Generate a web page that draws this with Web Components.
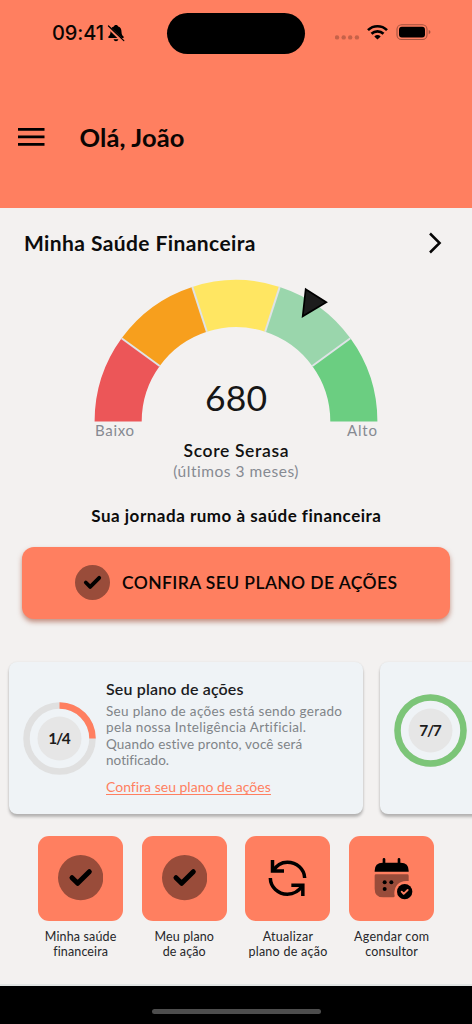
<!DOCTYPE html>
<html lang="pt-BR">
<head>
<meta charset="utf-8">
<title>Minha Saúde Financeira</title>
<style>
html,body{margin:0;padding:0;background:#f3f1f0}
body{width:472px;height:1024px;overflow:hidden;font-family:Lato,"Open Sans",sans-serif;color:#0c0c0c}
</style>
</head>
<body>
<finance-app></finance-app>
<script>
const define = (name, html, setup) => customElements.define(name, class extends HTMLElement {
  connectedCallback() {
    if (this.shadowRoot) return;
    const root = this.attachShadow({mode: 'open'});
    root.innerHTML = typeof html === 'function' ? html(this) : html;
    if (setup) setup(this, root);
  }
});

// One line of text, tracked so that it spans the width in "w".
define('text-line', el => `
<style>
:host{display:block;width:${el.getAttribute('w')}px;height:var(--lh,20px);line-height:var(--lh,20px);font-size:${el.getAttribute('s')}px;white-space:nowrap;flex:none}
span{display:inline-block;height:100%;vertical-align:top}
</style><span><slot></slot></span>`, (el, root) => {
  const span = root.querySelector('span');
  const natural = span.getBoundingClientRect().width;
  const spacing = (parseFloat(el.getAttribute('w')) - natural) / (el.textContent.length - 1);
  span.style.letterSpacing = spacing.toFixed(3) + 'px';
  span.style.marginRight = (-spacing).toFixed(3) + 'px';
});

define('status-bar', `
<style>
:host{display:grid;grid-template-columns:52px 53px 62px 138px 30px 1fr;height:66px;align-items:center}
.time{grid-column:2;font-family:Inter,sans-serif;font-weight:500;color:#0a0503}
.bell{width:18px;height:18px;margin-left:2px}
.island{width:138px;height:41px;border-radius:21px;background:#000}
.right{grid-column:6;width:100px;height:20px;margin-top:-2px}
svg{display:block}
</style>
<text-line class="time" w="52" s="20">09:41</text-line>
<svg class="bell" viewBox="0 0 18 18"><path d="M9 1C7.800 1 7 1.700 6.800 2.500 4.200 3.300 3.600 5.600 3.500 7.700 3.400 10.200 2.800 11.300 1.400 12.500v1.500h15.200v-1.500c-1.400-1.200-2-2.300-2.100-4.800-.1-2.100-.7-4.400-3.300-5.200C11 1.700 10.200 1 9 1zM6.600 15.200h4.800c-.3 1.200-1.200 2-2.400 2s-2.100-.8-2.400-2z"/><path d="M.8 2.600 16 17.400" stroke="#ff7f60" stroke-width="3"/><path d="M1.500 2 16.800 16.600" stroke="#000" stroke-width="1.300" stroke-linecap="round"/></svg>
<div class="island"></div>
<svg class="right" viewBox="335 22 100 20">
<g fill="#c66249"><circle cx="337" cy="37.400" r="2.200"/><circle cx="343.700" cy="37.400" r="2.200"/><circle cx="350.200" cy="37.400" r="2.200"/><circle cx="356.900" cy="37.400" r="2.200"/></g>
<g fill="none" stroke="#000" stroke-width="2.700"><path d="M368 30.100a13.600 13.600 0 0 1 19 0"/><path d="M371.500 33.800a8.700 8.700 0 0 1 12 0"/></g>
<path d="M377.500 39.600 374.300 36.500a4.700 4.700 0 0 1 6.400 0z"/>
<rect x="397" y="24.700" width="30" height="14.800" rx="4.600" fill="none" stroke="#a4523e" stroke-width="1.100"/><rect x="399" y="26.800" width="26" height="10.600" rx="2.900"/><path d="M428.700 30v4.200q1.800-.6 1.800-2.100t-1.800-2.100z" fill="#a4523e"/>
</svg>`);

define('app-header', `
<style>
:host{display:block;height:208px;background:#ff7f60}
.bar{display:flex;align-items:center;height:142px;padding-left:18px;gap:35px}
svg{display:block;width:26.500px;height:20px;margin-top:-1px}
text-line{font-weight:700;--lh:32px;color:#0a0503}
</style>
<status-bar></status-bar>
<div class="bar"><svg viewBox="0 0 26.500 20"><path d="M0 2.300h26.500M0 9.800h26.500M0 17.300h26.500" stroke="#000" stroke-width="2.700"/></svg><text-line w="105" s="25.500">Olá, João</text-line></div>`);

define('section-heading', el => `
<style>
:host{display:flex;align-items:center;justify-content:space-between;height:70px;padding:0 29px 0 24px}
text-line{font-weight:700}
svg{width:16px;height:24px}
</style>
<text-line w="231.500" s="21">${el.getAttribute('label')}</text-line>
<svg viewBox="0 0 16 24"><path d="M3 2.500 12.600 12 3 21.500" fill="none" stroke="#050505" stroke-width="2.500"/></svg>`);

define('score-gauge', () => {
  const colors = ['#ec5658', '#f79f1d', '#ffe662', '#9ad6ac', '#6bce81'];
  const pt = (r, deg) => { const a = deg * Math.PI / 180; return (236 - r * Math.cos(a)).toFixed(2) + ' ' + (421.400 - r * Math.sin(a)).toFixed(2); };
  const R = 141.400, r = 94.300;
  const arcs = colors.map((c, i) => `<path fill="${c}" d="M${pt(R, i*36)}A${R} ${R} 0 0 1 ${pt(R, i*36+36)}L${pt(r, i*36+36)}A${r} ${r} 0 0 0 ${pt(r, i*36)}Z"/>`).join('');
  const seps = [36, 72, 108, 144].map(a => `<path d="M${pt(R, a)}L${pt(r, a)}" stroke="#dfe3e6" stroke-width="2"/>`).join('');
  return `
<style>
:host{display:flex;flex-direction:column;align-items:center;position:relative;height:228px}
svg{display:block;width:472px;height:144px}
.score{position:absolute;top:100px;left:205px;--lh:40px;color:#161616}
.ends{display:flex;justify-content:space-between;width:282px;height:16px;--lh:16px;color:#868a92}
.name{margin-top:3px;font-weight:600;color:#111}
.sub{color:#868a92}
</style>
<svg viewBox="0 278 472 144">${arcs}${seps}<path d="M305.700 289.200 326.300 302.300 302.700 316.300z" fill="#1c1c1c" stroke="#000" stroke-width="1.700"/></svg>
<text-line class="score" w="62" s="35.500">680</text-line>
<div class="ends"><text-line w="39" s="15">Baixo</text-line><text-line w="30" s="15">Alto</text-line></div>
<text-line class="name" w="105" s="17.500">Score Serasa</text-line>
<text-line class="sub" w="125.500" s="15.500">(últimos 3 meses)</text-line>`;
});

define('check-disc', `
<style>:host{display:block}svg{display:block;width:100%;height:100%}</style>
<svg viewBox="0 0 136 136"><circle cx="68" cy="68" r="68" fill="#994c3a"/><path d="M42 68 59 85 94 50" fill="none" stroke="#000" stroke-width="15" stroke-linecap="round" stroke-linejoin="round"/></svg>`);

define('plan-button', `
<style>
:host{display:block;margin:21px 22px 0}
button{display:flex;align-items:center;gap:12px;width:428px;height:71.500px;padding:0 0 0 53px;border:0;border-radius:12px;background:#ff7f60;box-shadow:0 3px 5px rgba(155,65,40,.55);font:600 18px Lato,sans-serif;color:#0a0503}
check-disc{width:35px;height:35px}
</style>
<button><check-disc></check-disc><text-line w="275" s="17.500">CONFIRA SEU PLANO DE AÇÕES</text-line></button>`);

define('progress-ring', el => {
  const p = +el.getAttribute('done') / +el.getAttribute('total'), c = 2 * Math.PI * 33;
  return `
<style>
:host{display:grid;place-items:center;width:73px;height:73px;flex:none}
svg,text-line{grid-area:1/1}
svg{width:73px;height:73px}
text-line{font-weight:700;color:#1c1c1c}
</style>
<svg viewBox="0 0 73 73"><circle cx="36.500" cy="36.500" r="22" fill="#e6e6e6"/><g fill="none" stroke-width="6.500" transform="rotate(-90 36.500 36.500)"><circle cx="36.500" cy="36.500" r="33" stroke="#e0e0e0"/><circle cx="36.500" cy="36.500" r="33" stroke="${p < 1 ? '#ff7f60' : '#7cc578'}" stroke-dasharray="${c * p} ${c}"/></g></svg>
<text-line w="22.500" s="15.500">${el.getAttribute('done')}/${el.getAttribute('total')}</text-line>`;
});

define('plan-card', `
<style>
:host{display:flex;box-sizing:border-box;flex:none;width:354px;height:152px;border-radius:8px;background:#eff3f6;box-shadow:0 3px 3px rgba(0,0,0,.25),0 0 2px rgba(0,0,0,.08);padding-left:14px;gap:10px}
</style><slot></slot>`);

define('plan-carousel', `
<style>
:host{display:flex;gap:17px;padding:43.500px 0 0 9px;box-sizing:border-box;height:217px;overflow:hidden}
.r1{margin-top:39.500px}.r2{margin-top:31.500px}
.copy{display:flex;flex-direction:column;padding-top:17px}
.title{font-weight:600;color:#1b1c1e}
.body{--lh:16.500px;color:#808488}
.body:nth-child(2){margin-top:3.500px}
.link{margin-top:10px;color:#ff7f60;border-bottom:1px solid #ff7f60;--lh:15.500px}
</style>
<plan-card><progress-ring class="r1" done="1" total="4"></progress-ring><div class="copy">
<text-line class="title" w="137.500" s="16">Seu plano de ações</text-line>
<text-line class="body" w="236" s="13.500">Seu plano de ações está sendo gerado</text-line>
<text-line class="body" w="200" s="13.500">pela nossa Inteligência Artificial.</text-line>
<text-line class="body" w="196.500" s="13.500">Quando estive pronto, você será</text-line>
<text-line class="body" w="63" s="13.500">notificado.</text-line>
<text-line class="link" w="164.500" s="14">Confira seu plano de ações</text-line>
</div></plan-card>
<plan-card><progress-ring class="r2" done="7" total="7"></progress-ring></plan-card>`);

define('action-tile', `
<style>
:host{display:flex;flex-direction:column;align-items:center;width:85px}
.box{display:grid;place-items:center;width:85px;height:85px;border-radius:11px;background:#ff7f60;margin-bottom:8px}
::slotted(text-line){--lh:15.500px;color:#26272a}
</style><div class="box"><slot name="icon"></slot></div><slot></slot>`);

define('quick-actions', `
<style>
:host{display:flex;gap:18.700px;padding-left:38px;height:148px}
check-disc{width:45.300px;height:45.300px}
svg{display:block;width:85px;height:85px}
</style>
<action-tile><check-disc slot="icon"></check-disc><text-line w="71.500" s="12.500">Minha saúde</text-line><text-line w="54.500" s="12.500">financeira</text-line></action-tile>
<action-tile><check-disc slot="icon"></check-disc><text-line w="59.500" s="12.500">Meu plano</text-line><text-line w="43" s="12.500">de ação</text-line></action-tile>
<action-tile><svg slot="icon" viewBox="0 0 255 255"><g fill="none" stroke="#000" stroke-width="10.500"><path d="M82.500 72V105H117"/><path d="M84 105C94 88 109 78.500 127 78.500A52 49 0 0 1 179 126"/><path d="M173.500 180V147.500H139"/><path d="M76 126A51 49 0 0 0 127 174.500C147 174.500 162 165 172 149"/></g></svg><text-line w="50.500" s="12.500">Atualizar</text-line><text-line w="79" s="12.500">plano de ação</text-line></action-tile>
<action-tile><svg slot="icon" viewBox="0 0 255 255"><path d="M105 70v16M150 70v16" stroke="#000" stroke-width="8" stroke-linecap="round"/><path d="M77 107v-3q0-24 24-24h54q24 0 24 24v3z"/><path d="M81 115h94q4 0 4 4v16h-7q-35 2-36 37 0 4 1 7 0 5-4 5h-30q-26 0-26-26v-39q0-4 4-4z" fill="#994c3a"/><g><circle cx="107" cy="139" r="6"/><circle cx="127" cy="139" r="6"/><circle cx="107" cy="159" r="6"/></g><circle cx="167" cy="167" r="23"/><path d="M158 167 164 173.500 176 162" fill="none" stroke="#ff7f60" stroke-width="5.500" stroke-linecap="round" stroke-linejoin="round"/></svg><text-line w="75" s="12.500">Agendar com</text-line><text-line w="52.500" s="12.500">consultor</text-line></action-tile>`);

define('home-bar', `
<style>
:host{display:flex;justify-content:center;align-items:flex-start;height:38px;background:#000;border-top:2px solid #e0e4e4}
div{width:169px;height:5.500px;border-radius:3px;background:#4d4d4d;margin-top:23.300px}
</style><div></div>`);

define('finance-app', `
<style>
:host{display:block;width:472px;height:1024px;overflow:hidden;background:#f3f1f0}
.journey{font-weight:700;margin:0 auto}
</style>
<app-header></app-header>
<section-heading label="Minha Saúde Financeira"></section-heading>
<score-gauge></score-gauge>
<text-line class="journey" w="289.500" s="17">Sua jornada rumo à saúde financeira</text-line>
<plan-button></plan-button>
<plan-carousel></plan-carousel>
<quick-actions></quick-actions>
<home-bar></home-bar>`);
</script>
</body>
</html>
